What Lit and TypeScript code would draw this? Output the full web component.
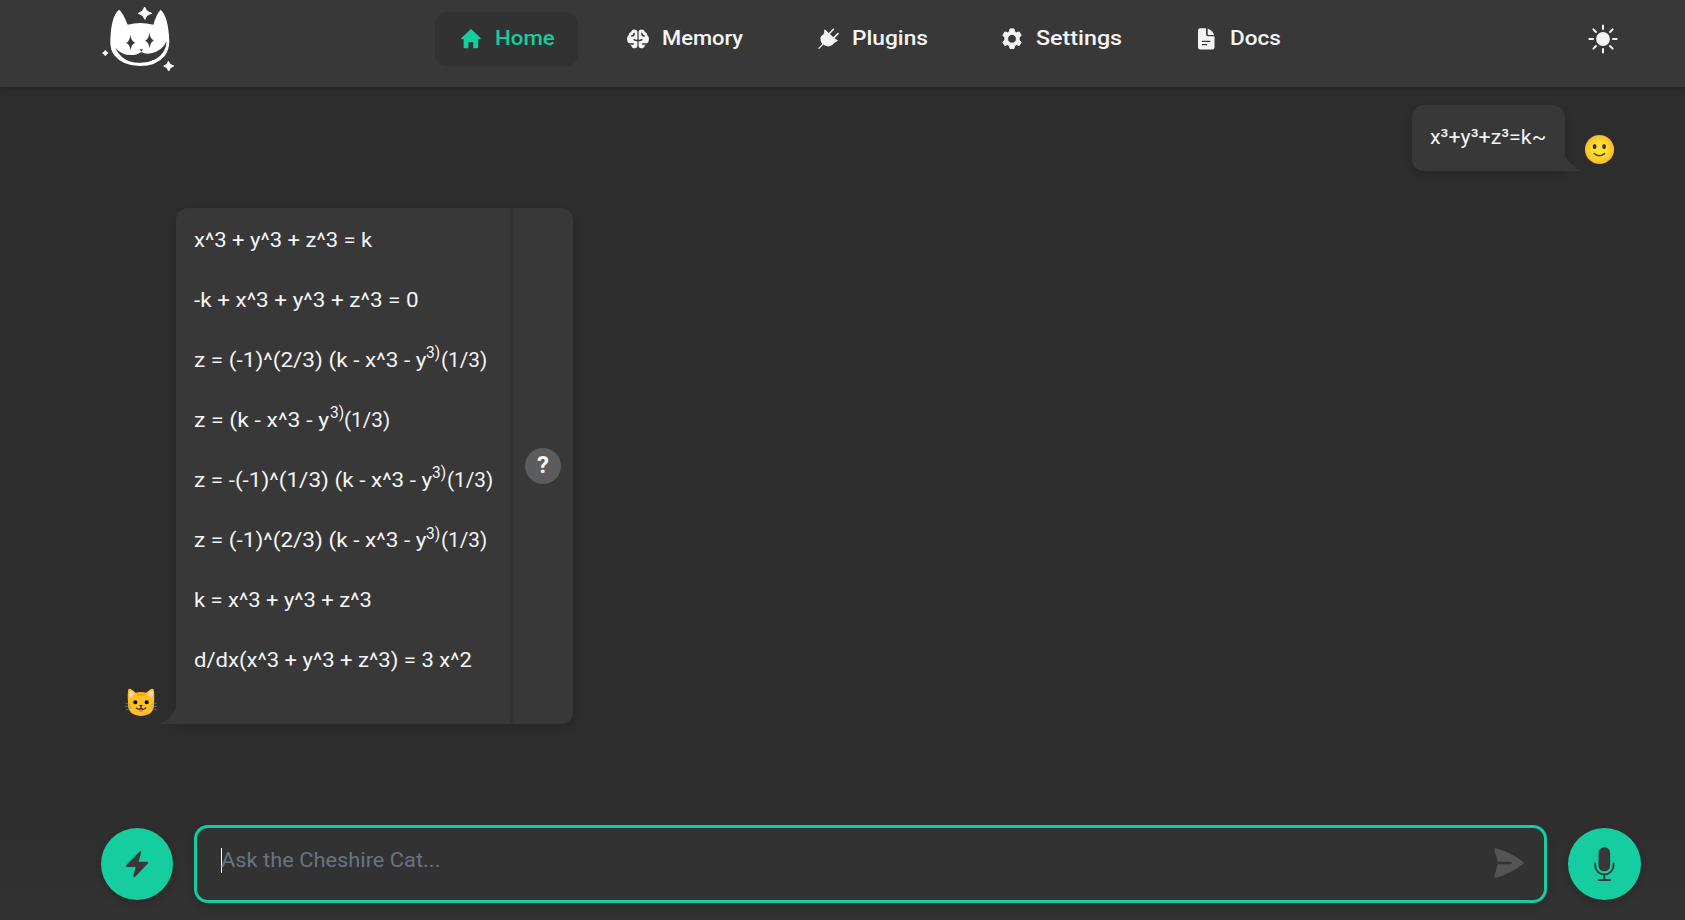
import { LitElement, html, css, svg } from "lit";
import { customElement, property } from "lit/decorators.js";

// Text run stretched horizontally so that it spans a given width.
@customElement("fit-text")
class FitText extends LitElement {
  @property({ type: Number }) width = 0;
  static styles = css`
    :host { display: block; white-space: pre; }
    span { display: inline-block; transform-origin: 0 50%; }
  `;
  firstUpdated() {
    const fit = () => {
      const run = this.renderRoot.querySelector("span") as HTMLElement;
      this.style.width = this.width + "px";
      run.style.transform = `scaleX(${this.width / run.offsetWidth})`;
    };
    fit();
    document.fonts?.ready.then(fit);
  }
  render() { return html`<span><slot></slot></span>`; }
}

const icons = {
  home: svg`<path d="M12 2 2.3 11.1Q1.7 12.3 3 12.3H4.6V20.2Q4.6 21.3 5.7 21.3H9.4V15.2H14.2V21.3H18Q19.2 21.3 19.2 20.2V12.3H21Q22.3 12.3 21.6 11.1Z" fill="currentColor"/>`,
  brain: svg`<path d="M11.4 4.6V12.500L10.600 13.400 11.400 14.300V19.2Q11 21.300 8.700 21.200 5.600 21.200 5.300 18.400 3.200 18.300 3 16.300 1 15 1 12 1 9.600 2.800 8 2.600 5.600 5 4.900 5.800 2.500 8.400 2.500 11 2.500 11.400 4.600ZM12.600 4.600V12.500L13.400 13.400 12.600 14.300V19.200Q13 21.300 15.300 21.200 18.400 21.200 18.700 18.400 20.800 18.300 21 16.300 23 15 23 12 23 9.600 21.200 8 21.400 5.600 19 4.900 18.200 2.500 15.600 2.500 13 2.500 12.600 4.600Z" fill="currentColor"/><path d="M5.600 8.900Q8 9 8.200 6.400M18.400 8.900Q16 9 15.800 6.400M2.800 16.900H7.400M21.200 16.900H16.600M8.200 12.600Q9.600 13.800 11.600 13.400M15.800 12.600Q14.400 13.800 12.400 13.400" class="cut thick"/>`,
  plug: svg`<path d="M8.700 2.200 12.500 5.800 18.500 11.300 22 13.600Q20.600 15.300 18.800 15.400L16.200 18Q12.400 20.600 8.400 18.300L7.500 17.600 3 22 2.100 21.200 6.200 16.900Q3.500 13.200 4.800 9.700L8.200 6.200Q7.700 3.800 8.700 2.200Z" fill="currentColor" /><path d="M13.700 6.300 17.400 2.200M18 10.600 22 6.600" fill="none" stroke="currentColor" stroke-width="1.500" stroke-linecap="round"/>`,
  gear: svg`<path fill="currentColor" stroke="currentColor" stroke-width="1" stroke-linejoin="round" fill-rule="evenodd" d="M10 1.900h4l.6 2.800 1.900 1.100 2.700-.9 2 3.500-2.100 1.900v2.800l2.100 1.900-2 3.500-2.700-.9-1.900 1.100-.6 2.800h-4l-.6-2.800-1.900-1.100-2.700.9-2-3.500 2.100-1.900v-2.800L2.800 8.400l2-3.500 2.700.9 1.900-1.100ZM12 7.400a4.400 4.400 0 1 0 0 8.800 4.400 4.400 0 0 0 0-8.800Z"/>`,
  doc: svg`<path fill="currentColor" d="M6.200 1.300H12V7.200Q12 9.200 14 9.200H20.500V20.300Q20.500 22.500 18.300 22.500H6.200Q4 22.500 4 20.300V3.500Q4 1.300 6.200 1.300Z"/><path fill="currentColor" d="M13.700 1.600Q18.800 4 20.100 7.900H14.600Q13.700 7.900 13.700 7Z"/><path class="cut" d="M8.500 14.400H15.800M8.500 17.700H12.600"/>`,
};

@customElement("app-root")
class AppRoot extends LitElement {
  static styles = css`
    :host { display: flex; flex-direction: column; box-sizing: border-box; width: 100%; height: 920px; overflow: hidden; font-family: Roboto, "Liberation Sans", sans-serif; font-size: 21px; color: #f4f4f4; background: linear-gradient(#2d2d2d 0 800px, #323232 920px); }
    * { box-sizing: border-box; }
    svg { display: block; flex: none; overflow: visible; }
    header { height: 87px; flex: none; display: flex; align-items: flex-start; background: #383838; box-shadow: 0 2px 5px #0003; padding-left: 90px; }
    .logo { width: 110px; margin-right: 235px; }
    nav { display: flex; gap: 24px; padding-top: 12px; }
    .item { display: flex; align-items: center; height: 54px; gap: 12px; padding: 0 24px; border-radius: 12px; font-weight: 500; line-height: 30px; }
    .item fit-text { margin-top: -2px; }
    .active { background: #323232; color: #16cd9f; }
    .cut { fill: none; stroke: #383838; stroke-width: 1.3; stroke-linecap: round; }
    .thick { stroke-width: 1.5; }
    .sun { margin: 22px 65px 0 auto; }
    main { flex: 1; display: flex; flex-direction: column; padding: 18px 70px 0 124px; }
    .row { display: flex; align-items: flex-end; }
    .row.me { justify-content: flex-end; }
    .bubble { position: relative; background: #383838; box-shadow: 0 4px 9px #0002; }
    .me .bubble { width: 153px; height: 66px; border-radius: 12px 12px 0 12px; padding: 17px 0 0 18px; line-height: 30px; margin-right: 19px; }
    .tail { position: absolute; bottom: 0; }
    .me .tail { left: 100%; }
    .bot .tail { right: 100%; }
    .me .face { margin-bottom: 6px; }
    .bot { margin-top: 37px; }
    .bot .bubble { width: 397px; height: 516px; border-radius: 12px 12px 12px 0; display: flex; margin-left: 17px; }
    .bot .face { margin-bottom: 6px; }
    .text { width: 337px; border-right: 3px solid #323232; padding: 16.600px 0 0 18px; }
    .line { display: flex; height: 60.1px; line-height: 30px; }
    .sup { font-size: 16px; margin-top: -6.500px; }
    .why { flex: 1; display: flex; align-items: center; justify-content: center; }
    .q { width: 36px; height: 36px; border-radius: 50%; background: #5c5c5c; display: flex; align-items: center; justify-content: center; font-weight: 700; font-size: 24px; line-height: 34px; padding-bottom: 3px; }
    footer { height: 95px; display: flex; align-items: flex-start; padding-left: 101px; flex: none; }
    .round { width: 72px; height: 72px; margin-top: 3px; border-radius: 50%; background: #16cd9f; box-shadow: 0 4px 9px #0002; flex: none; }
    .mic { width: 73px; }
    .field { width: 1353px; height: 78px; margin: 0 21px; border: 3px solid #16cd9f; border-radius: 14px; background: #323232; box-shadow: 0 4px 9px #0002; display: flex; align-items: flex-start; padding: 20px 20px 0 24px; color: #6b7280; }
    .caret { width: 1px; height: 25px; background: #fff; margin-right: -1px; }
    .field fit-text { line-height: 25px; }
    .send { margin-left: auto; }
  `;
  nav = [["home", "Home", 59.4], ["brain", "Memory", 81.4], ["plug", "Plugins", 75.800], ["gear", "Settings", 86.4], ["doc", "Docs", 50.500]] as const;
  // Each line is a list of [width, text] runs; the second run is raised.
  lines: [number, string][][] = [
    [[178.5, "x^3 + y^3 + z^3 = k"]],
    [[225, "-k + x^3 + y^3 + z^3 = 0"]],
    [[232, "z = (-1)^(2/3) (k - x^3 - y"], [14.5, "3)"], [46.5, "(1/3)"]],
    [[135.5, "z = (k - x^3 - y"], [14.5, "3)"], [46.5, "(1/3)"]],
    [[238, "z = -(-1)^(1/3) (k - x^3 - y"], [14.5, "3)"], [46.5, "(1/3)"]],
    [[232, "z = (-1)^(2/3) (k - x^3 - y"], [14.5, "3)"], [46.5, "(1/3)"]],
    [[178, "k = x^3 + y^3 + z^3"]],
    [[277.5, "d/dx(x^3 + y^3 + z^3) = 3 x^2"]],
  ];
  render() {
    return html`
      <header>
        <svg class="logo" width="110" height="87" viewBox="0 0 330 261">
          <path fill="#fff" d="M87 29Q98 36 113 74 150 64 190 74 200 40 212 29 235 48 238 125 237 150 224 168 200 198 149 198 98 198 73 166 60 148 61 125 62 50 87 29Z"/>
          <path fill="#383838" d="M76 143Q94 165 122 165 142 165 149 158 151 157 155 157 164 163 184 160 216 153 230 124 228 160 196 178 172 190 146 188 96 187 76 143Z"/>
          <path fill="#383838" d="M121 105Q124 125 136 128 124 132 122 151 119 132 108 129 119 125 121 105ZM178 98Q181 118 192 121 181 126 179 145 176 126 165 122 176 118 178 98ZM149 148H159L154 155Z"/>
          <path fill="#fff" stroke="#fff" stroke-width="3" stroke-linejoin="round" d="M164 21Q168 35 185 40 168 44 165 58 160 44 145 40 160 36 164 21ZM46 151Q48 157 54 159 48 162 46 167 43 162 38 159 44 157 46 151ZM235 184Q238 195 251 198 239 201 236 213 233 201 221 198 233 195 235 184Z"/>
        </svg>
        <nav>${this.nav.map(([icon, label, w], i) => html`
          <div class="item ${i ? "" : "active"}"><svg width="24" height="24" viewBox="0 0 24 24">${icons[icon]}</svg><fit-text .width=${w}>${label}</fit-text></div>`)}</nav>
        <svg class="sun" width="34" height="34" viewBox="-17 -17 34 34" stroke="#f4f4f4" stroke-width="2" stroke-linecap="round">
          <circle r="6.900" fill="#f4f4f4" stroke="none"/>
          ${[0, 45, 90, 135, 180, 225, 270, 315].map(a => svg`<path d="M0-10V-13.600" transform="rotate(${a})"/>`)}
        </svg>
      </header>
      <main>
        <div class="row me">
          <div class="bubble"><fit-text .width=${116}>x³+y³+z³=k~</fit-text>
            <svg class="tail" width="17" height="16"><path fill="#383838" d="M0 0Q6 12 17 16H0Z"/></svg></div>
          <svg class="face" width="31" height="31" viewBox="0 0 31 31">
            <defs><radialGradient id="smile"><stop offset=".5" stop-color="#fde030"/><stop offset=".92" stop-color="#f7c02b"/><stop offset="1" stop-color="#f4a223"/></radialGradient></defs>
            <circle cx="15.500" cy="15.500" r="14.600" fill="url(#smile)"/>
            <ellipse cx="10.600" cy="12.400" rx="1.900" ry="2.500" fill="#422b0d"/><ellipse cx="20.100" cy="12.400" rx="1.900" ry="2.500" fill="#422b0d"/>
            <path d="M10.300 19.600Q15.500 24 20.600 19.600" fill="none" stroke="#573e1b" stroke-width="1.500" stroke-linecap="round"/>
          </svg>
        </div>
        <div class="row bot">
          <svg class="face" width="35" height="31" viewBox="0 0 105 93">
            <path fill="#ffc022" d="M13 7Q17 1 35 17 50 13 67 17 84 1 89 7 92 20 90 48 93 84 51 87 9 84 12 48 10 20 13 7Z"/>
            <path fill="#ffd3c8" d="M16 12Q20 9 31 21L18 34Q14 24 16 12ZM86 12Q82 9 71 21L84 34Q88 24 86 12Z"/>
            <path d="M42 17V27M51 15V28M60 17V27" stroke="#ff8a25" stroke-width="4"/>
            <circle cx="34" cy="46" r="6"/><circle cx="68" cy="46" r="6"/><path d="M46 54H56L51 61Z"/>
            <path fill="#f76c8b" d="M45 67Q51 62 57 67 57 76 51 76 45 76 45 67Z"/>
            <path d="M36 62Q44 71 51 63 58 71 66 62" fill="none" stroke="#222" stroke-width="3.500"/>
            <path d="M4 48 20 53M3 58H20M5 69 20 63M98 48 82 53M99 58H82M97 69 82 63" stroke="#8b8984" stroke-width="2"/>
          </svg>
          <div class="bubble">
            <svg class="tail" width="17" height="16"><path fill="#383838" d="M17 0Q11 12 0 16H17Z"/></svg>
            <div class="text">${this.lines.map(runs => html`<div class="line">${runs.map(([w, t], i) => html`<fit-text class=${i === 1 ? "sup" : "run"} .width=${w}>${t}</fit-text>`)}</div>`)}</div>
            <div class="why"><div class="q">?</div></div>
          </div>
        </div>
      </main>
      <footer>
        <svg class="round" viewBox="0 0 216 216"><path fill="#383838" d="M117 70Q121 69 120 74L113 101H139Q144 102 141 106L102 147Q97 150 97 144L104 117H77Q72 115 76 111Z"/></svg>
        <div class="field"><i class="caret"></i><fit-text .width=${219.5}>Ask the Cheshire Cat...</fit-text>
          <svg class="send" width="30" height="30" viewBox="0 0 90 90"><path fill="#545454" d="M5 1Q48 12 89 43 90 45 89 47 48 78 5 89 1 89 1 85L11 49H50Q54 48 54 45 54 42 50 41H11L1 5Q1 1 5 1Z"/></svg></div>
        <svg class="round mic" viewBox="0 0 216 216"><rect x="90" y="58" width="35" height="72" rx="17" fill="#383838"/><path d="M80 106V113A27.500 26 0 0 0 135 113V106M107.500 139V156M90 156H125" fill="none" stroke="#383838" stroke-width="5.500" stroke-linecap="round"/></svg>
      </footer>`;
  }
}
